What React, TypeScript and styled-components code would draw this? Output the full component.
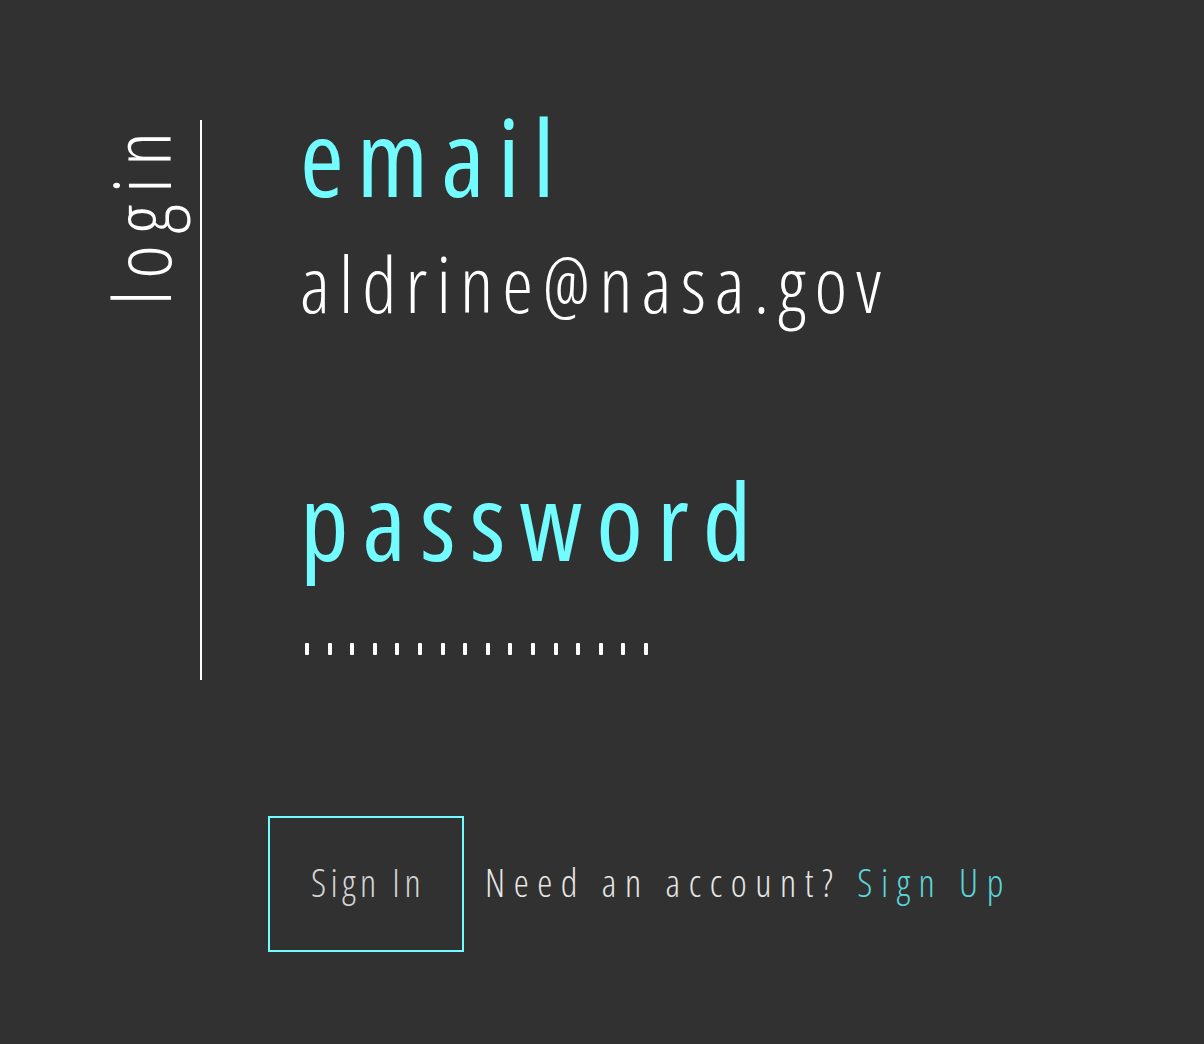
import styled, { createGlobalStyle } from 'styled-components'

const GlobalStyle = createGlobalStyle`
  html, body {
    margin: 0;
    padding: 0;
    background: #313131;
  }
  body {
    font-family: 'Open Sans', 'Liberation Sans', sans-serif;
    font-stretch: condensed;
    color: #ffffff;
  }
`

const Page = styled.main`
  width: 1204px;
  min-height: 1044px;
  box-sizing: border-box;
  padding-top: 120px;
`

const Panel = styled.div`
  display: flex;
  align-items: flex-start;
`

const Side = styled.div`
  width: 200px;
  display: flex;
  justify-content: flex-end;
  padding-right: 20px;
  box-sizing: border-box;
`

const Title = styled.h1`
  margin: 0;
  writing-mode: vertical-rl;
  transform: rotate(180deg);
  font-weight: 300;
  font-stretch: condensed;
  font-size: 80px;
  line-height: 80px;
  letter-spacing: 12px;
  color: #ffffff;
`

const Fields = styled.div`
  border-left: 2px solid #ffffff;
  padding-left: 98px;
  height: 560px;
  box-sizing: border-box;
  display: flex;
  flex-direction: column;
`

const Label = styled.label<{ $gap?: number; $spacing: number }>`
  display: block;
  color: #72fcff;
  font-weight: 400;
  font-stretch: condensed;
  font-size: 106px;
  line-height: 72px;
  letter-spacing: ${(p) => p.$spacing}px;
  margin-top: ${(p) => p.$gap ?? 0}px;
`

const Value = styled.div`
  font-weight: 300;
  font-stretch: condensed;
  font-size: 78px;
  line-height: 90px;
  letter-spacing: 9px;
  margin-top: 46px;
  color: #ffffff;
`

const Dots = styled.div`
  display: flex;
  gap: 18.6px;
  margin-top: 87px;
  padding-left: 5px;
`

const Dot = styled.span`
  width: 4px;
  height: 12px;
  border-radius: 1px;
  background: #ffffff;
`

const Footer = styled.div`
  display: flex;
  align-items: center;
  margin-top: 136px;
  padding-left: 268px;
`

const Button = styled.button`
  width: 196px;
  height: 136px;
  background: transparent;
  border: 2px solid #72fcff;
  color: #d4d4d4;
  font-family: 'Open Sans', 'Liberation Sans', sans-serif;
  font-stretch: condensed;
  font-weight: 300;
  font-size: 38px;
  letter-spacing: 4.5px;
  padding: 0 0 4px 4px;
  cursor: pointer;
`

const Prompt = styled.p`
  margin: 0 0 4px 21px;
  font-weight: 300;
  font-stretch: condensed;
  font-size: 38px;
  letter-spacing: 8.6px;
  color: #e6e6e6;
`

const SignUp = styled.a`
  color: #5ad6da;
  text-decoration: none;
  cursor: pointer;
`

export default function App() {
  return (
    <>
      <GlobalStyle />
      <Page>
        <Panel>
          <Side>
            <Title>login</Title>
          </Side>
          <Fields>
            <Label $spacing={13}>email</Label>
            <Value>aldrine@nasa.gov</Value>
            <Label $gap={156} $spacing={14}>
              password
            </Label>
            <Dots>
              {Array.from({ length: 16 }).map((_, i) => (
                <Dot key={i} />
              ))}
            </Dots>
          </Fields>
        </Panel>
        <Footer>
          <Button type="button">Sign In</Button>
          <Prompt>
            Need an account? <SignUp>Sign Up</SignUp>
          </Prompt>
        </Footer>
      </Page>
    </>
  )
}
